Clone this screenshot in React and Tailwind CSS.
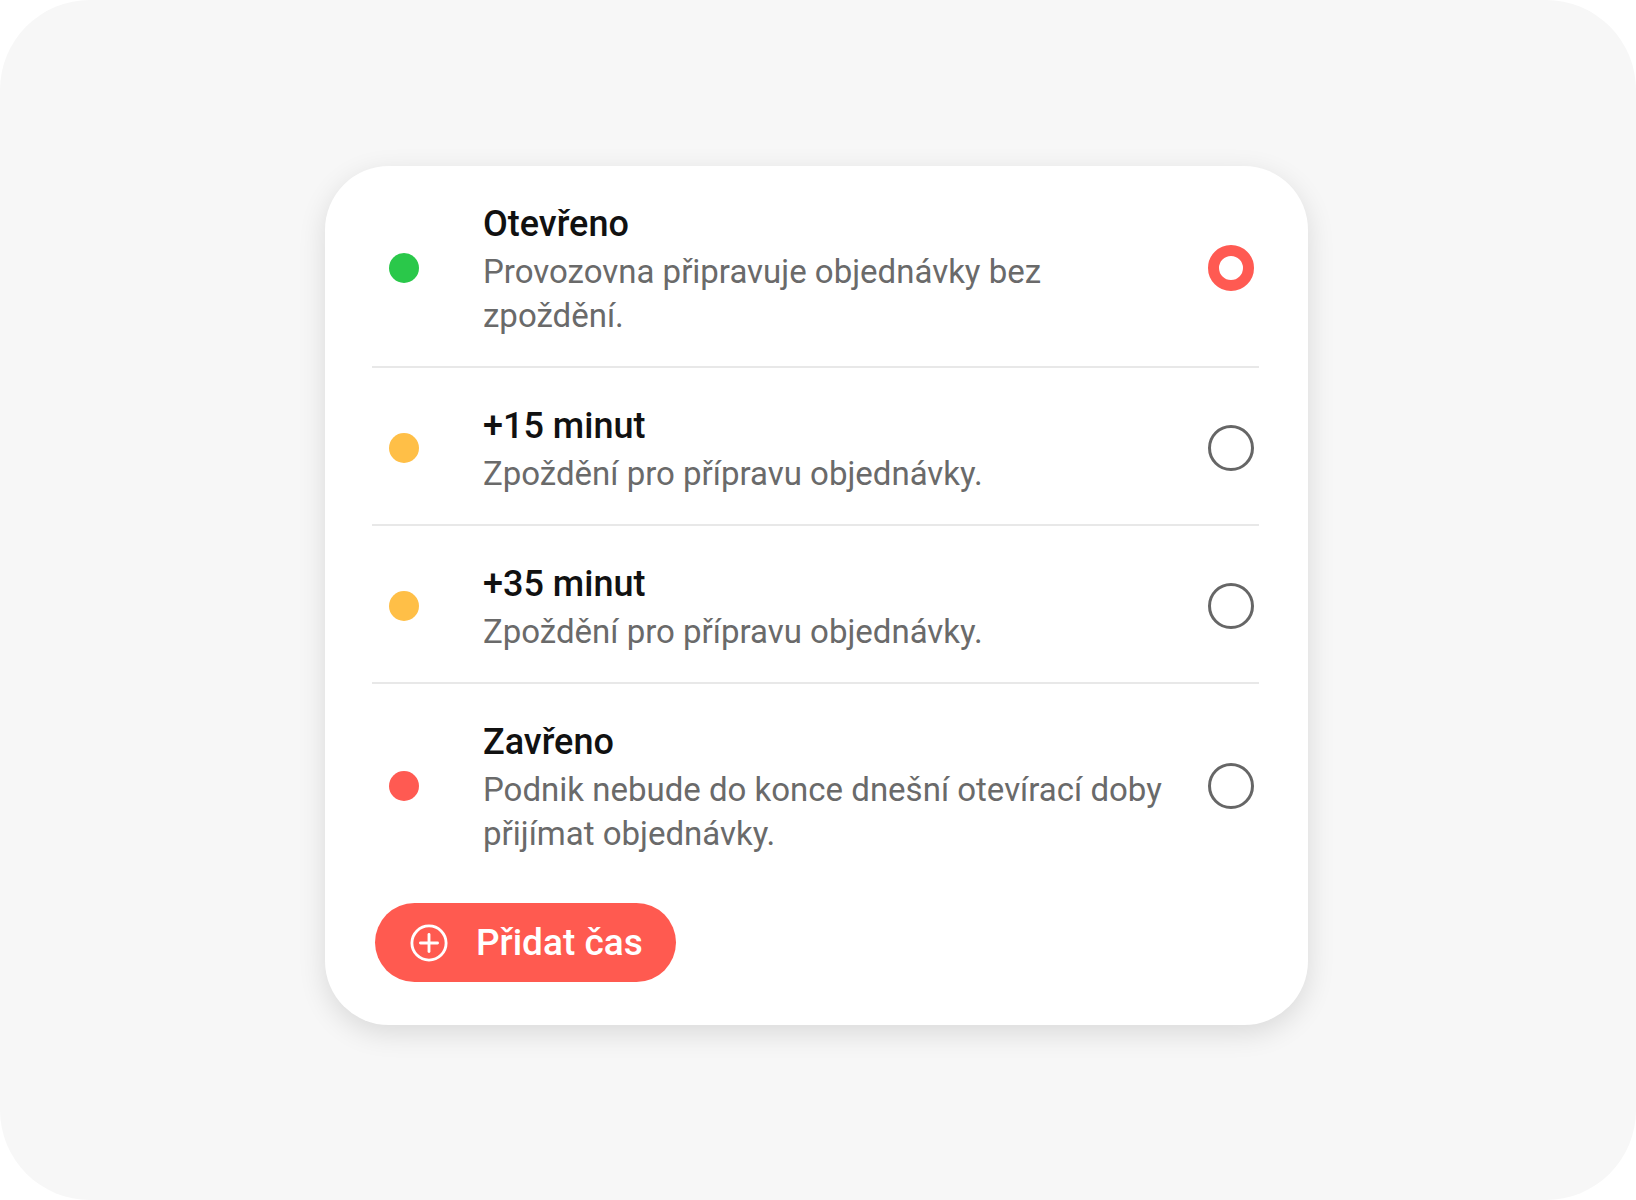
import React from "react";

const rows = [
  {
    title: "Otevřeno",
    desc: ["Provozovna připravuje objednávky bez", "zpoždění."],
    dot: "bg-[#2ac84a]",
    selected: true,
  },
  {
    title: "+15 minut",
    desc: ["Zpoždění pro přípravu objednávky."],
    dot: "bg-[#ffbf47]",
  },
  {
    title: "+35 minut",
    desc: ["Zpoždění pro přípravu objednávky."],
    dot: "bg-[#ffbf47]",
  },
  {
    title: "Zavřeno",
    desc: ["Podnik nebude do konce dnešní otevírací doby", "přijímat objednávky."],
    dot: "bg-[#ff5a52]",
  },
];

function Radio({ selected }) {
  if (selected) {
    return <div className="w-[46px] h-[46px] rounded-full border-[11px] border-[#ff5a52] bg-white shrink-0" />;
  }
  return <div className="w-[46px] h-[46px] rounded-full border-[3px] border-[#666666] bg-white shrink-0" />;
}

function Row({ row, last }) {
  return (
    <div className={last ? "" : "border-b-2 border-[#e8e8e8]"}>
      <div className="flex items-center pt-8 pb-[28px]">
        <div className={`ml-[17px] w-[30px] h-[30px] rounded-full shrink-0 ${row.dot}`} />
        <div className="ml-[64px] pt-1 flex-1 whitespace-nowrap">
          <div className="text-[36px] leading-[44px] font-medium text-[#111111]">{row.title}</div>
          <div className="mt-1 text-[33px] leading-[44px] text-[#6a6a6a]">
            {row.desc.map((l, i) => (
              <React.Fragment key={i}>
                {i > 0 && <br />}
                {l}
              </React.Fragment>
            ))}
          </div>
        </div>
        <div className="mr-[5px]">
          <Radio selected={row.selected} />
        </div>
      </div>
    </div>
  );
}

export default function App() {
  return (
    <div className="w-[1636px] h-[1200px] bg-white" style={{ fontFamily: "Roboto, 'Noto Sans', sans-serif" }}>
      <div className="w-full h-full bg-[#f7f7f7] rounded-[90px] flex pl-[325px] pt-[166px]">
        <div className="w-[983px] h-fit bg-white rounded-[64px] shadow-[0_8px_28px_rgba(0,0,0,0.12)] pl-[47px] pr-[49px] pb-[43px]">
          {rows.map((r, i) => (
            <Row key={i} row={r} last={i === rows.length - 1} />
          ))}
          <button className="ml-[3px] mt-[19px] h-[79px] pl-[35px] pr-[33px] rounded-full bg-[#ff5a50] flex items-center text-white">
            <svg width="38" height="38" viewBox="0 0 40 40" fill="none" stroke="white" strokeWidth="3" strokeLinecap="round">
              <circle cx="20" cy="20" r="18" />
              <line x1="11" y1="20" x2="29" y2="20" />
              <line x1="20" y1="11" x2="20" y2="29" />
            </svg>
            <span className="ml-[28px] text-[37px] leading-[44px] font-medium">Přidat čas</span>
          </button>
        </div>
      </div>
    </div>
  );
}
